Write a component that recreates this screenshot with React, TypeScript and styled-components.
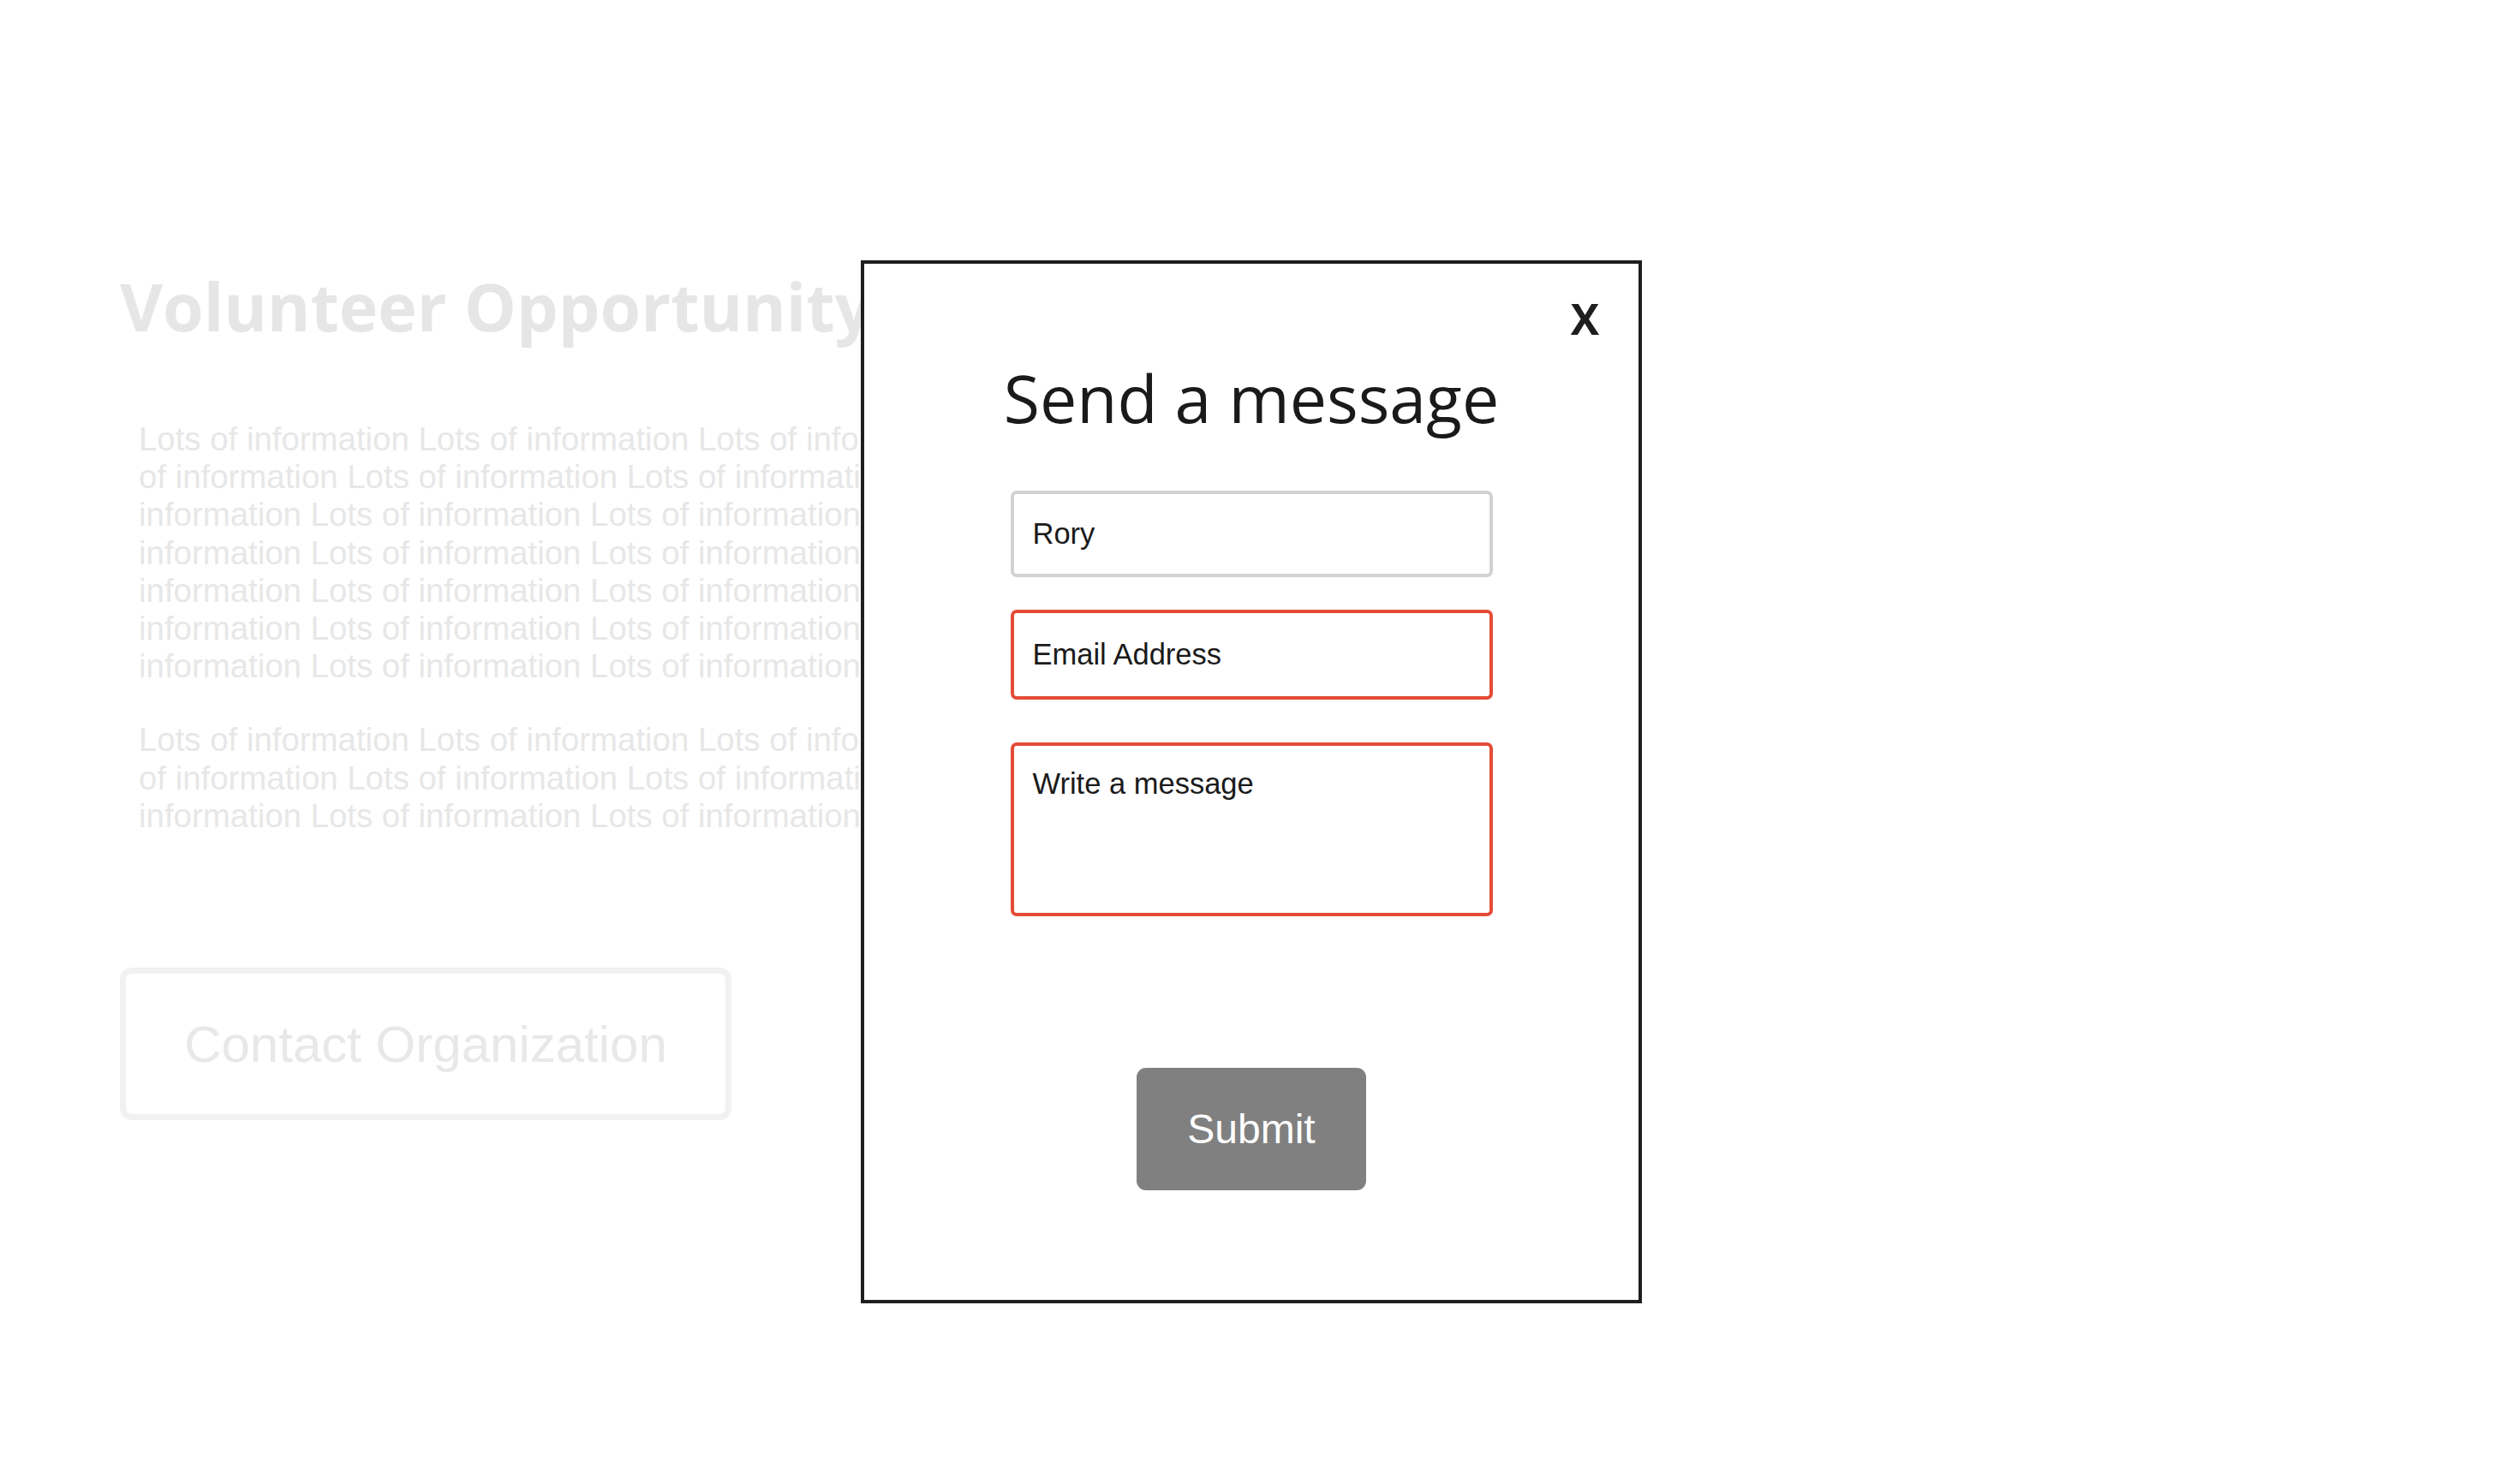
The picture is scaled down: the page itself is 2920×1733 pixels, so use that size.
import * as React from "react";
import styled, { createGlobalStyle } from "styled-components";

const GlobalStyle = createGlobalStyle`
  html, body {
    margin: 0;
    padding: 0;
    background: #ffffff;
  }
  body {
    font-family: "Liberation Sans", Arial, sans-serif;
  }
`;

const Page = styled.div`
  position: relative;
  width: 2920px;
  height: 1733px;
  overflow: hidden;
  background: #ffffff;
`;

const Listing = styled.main`
  display: flex;
  flex-direction: column;
  align-items: flex-start;
  padding: 310px 140px 0 140px;
`;

const Title = styled.h1`
  margin: 0;
  font-family: "Open Sans", sans-serif;
  font-weight: 700;
  font-size: 77px;
  line-height: 96px;
  color: #e6e6e6;
  white-space: nowrap;
`;

const Info = styled.p<{ $gap: number }>`
  margin: ${(p) => p.$gap}px 0 0 22px;
  width: 44.97em;
  font-family: "Liberation Sans", Arial, sans-serif;
  font-size: 38.4px;
  line-height: 44.2px;
  color: #e7e7e7;
`;

const ContactButton = styled.button`
  box-sizing: border-box;
  margin-top: 155px;
  width: 714px;
  height: 178px;
  border: 7px solid #f1f1f1;
  border-radius: 14px;
  background: #ffffff;
  font-family: "Liberation Sans", Arial, sans-serif;
  font-size: 60px;
  color: #e8e8e8;
  display: flex;
  align-items: center;
  justify-content: center;
  padding: 0;
`;

const Modal = styled.section`
  position: absolute;
  left: 1005px;
  top: 304px;
  box-sizing: border-box;
  width: 912px;
  height: 1218px;
  border: 4px solid #1e1e1e;
  background: #ffffff;
  display: flex;
  flex-direction: column;
  align-items: center;
`;

const CloseButton = styled.button`
  position: absolute;
  top: 39px;
  right: 46px;
  border: none;
  background: none;
  padding: 0;
  font-family: "Open Sans", sans-serif;
  font-weight: 700;
  font-size: 50px;
  line-height: 1;
  color: #1e1e1e;
  cursor: pointer;
`;

const ModalTitle = styled.h2`
  margin: 118px 0 0 0;
  font-family: "Open Sans", sans-serif;
  font-weight: 400;
  font-size: 77px;
  line-height: 1;
  color: #1a1a1a;
`;

const Form = styled.form`
  display: flex;
  flex-direction: column;
  align-items: center;
  margin-top: 70px;
`;

const fieldStyles = `
  box-sizing: border-box;
  width: 563px;
  border-radius: 7px;
  background: #ffffff;
  font-family: "Liberation Sans", Arial, sans-serif;
  font-size: 34.5px;
  color: #1a1a1a;
  outline: none;
  &::placeholder {
    color: #1a1a1a;
    opacity: 1;
  }
`;

const Field = styled.input<{ $invalid?: boolean; $height: number; $gap: number }>`
  ${fieldStyles}
  height: ${(p) => p.$height}px;
  margin-top: ${(p) => p.$gap}px;
  padding: 0 22px;
  border: 4px solid ${(p) => (p.$invalid ? "#e44c37" : "#d2d2d2")};
`;

const MessageArea = styled.textarea<{ $invalid?: boolean }>`
  ${fieldStyles}
  height: 203px;
  margin-top: 50px;
  padding: 25px 22px;
  resize: none;
  border: 4px solid ${(p) => (p.$invalid ? "#e44c37" : "#d2d2d2")};
`;

const SubmitButton = styled.button`
  margin-top: 177px;
  width: 268px;
  height: 143px;
  border: none;
  border-radius: 11px;
  background: #808080;
  color: #ffffff;
  font-family: "Liberation Sans", Arial, sans-serif;
  font-size: 48px;
  padding: 0;
`;

const repeat = (n: number) =>
  Array.from({ length: n }, () => "Lots of information").join(" ");

export default function App() {
  return (
    <Page>
      <GlobalStyle />
      <Listing>
        <Title>Volunteer Opportunity</Title>
        <Info $gap={85}>{repeat(35)}</Info>
        <Info $gap={42}>{repeat(14)}</Info>
        <ContactButton type="button">Contact Organization</ContactButton>
      </Listing>

      <Modal>
        <CloseButton type="button" aria-label="Close">
          X
        </CloseButton>
        <ModalTitle>Send a message</ModalTitle>
        <Form onSubmit={(e) => e.preventDefault()}>
          <Field $height={101} $gap={0} defaultValue="Rory" />
          <Field $height={105} $gap={38} $invalid placeholder="Email Address" />
          <MessageArea $invalid placeholder="Write a message" />
          <SubmitButton type="submit">Submit</SubmitButton>
        </Form>
      </Modal>
    </Page>
  );
}
